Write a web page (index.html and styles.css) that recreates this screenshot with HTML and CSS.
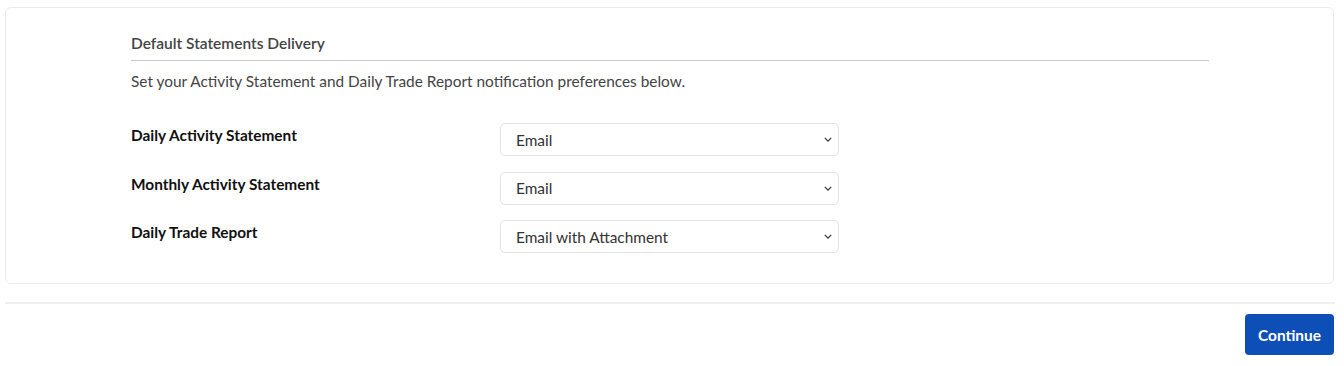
FILE: index.html
```html
<!DOCTYPE html>
<html lang="en">
<head>
  <meta charset="UTF-8">
  <meta name="viewport" content="width=device-width, initial-scale=1.0">
  <title>Default Statements Delivery</title>
  <link rel="stylesheet" href="styles.css">
</head>
<body>
  <main class="page">
    <section class="card">
      <div class="card-inner">
        <h2 class="card-title">Default Statements Delivery</h2>
        <p class="intro">Set your Activity Statement and Daily Trade Report notification preferences below.</p>
        <div class="form-row">
          <label for="das">Daily Activity Statement</label>
          <span class="select-wrap">
            <select id="das">
              <option>Email</option>
              <option>Email with Attachment</option>
            </select>
            <svg class="chevron" width="10" height="6" viewBox="0 0 10 6"><path d="M1 1l4 4 4-4" fill="none" stroke="#333" stroke-width="1.5"/></svg>
          </span>
        </div>
        <div class="form-row">
          <label for="mas">Monthly Activity Statement</label>
          <span class="select-wrap">
            <select id="mas">
              <option>Email</option>
              <option>Email with Attachment</option>
            </select>
            <svg class="chevron" width="10" height="6" viewBox="0 0 10 6"><path d="M1 1l4 4 4-4" fill="none" stroke="#333" stroke-width="1.5"/></svg>
          </span>
        </div>
        <div class="form-row">
          <label for="dtr">Daily Trade Report</label>
          <span class="select-wrap">
            <select id="dtr">
              <option>Email</option>
              <option selected>Email with Attachment</option>
            </select>
            <svg class="chevron" width="10" height="6" viewBox="0 0 10 6"><path d="M1 1l4 4 4-4" fill="none" stroke="#333" stroke-width="1.5"/></svg>
          </span>
        </div>
      </div>
    </section>
    <hr class="divider">
    <div class="actions">
      <button class="btn-primary" type="button">Continue</button>
    </div>
  </main>
</body>
</html>
```

FILE: styles.css
```css
* {
  padding: 0;
  margin: 0;
  box-sizing: border-box;
}
body {
  font-family: "Lato", "Open Sans", sans-serif;
  font-size: 15.4px;
  color: #333;
  background-color: #fff;
}
.page {
  padding: 7px 10px 0 5px;
}
.card {
  border: 1px solid #ebebeb;
  border-radius: 6px;
  height: 277px;
}
.card-inner {
  padding: 26px 124px 0 125px;
}
.card-title {
  font-size: 15.5px;
  font-weight: 600;
  color: #444;
  padding-bottom: 8px;
  border-bottom: 1px solid #c8c8c8;
}
.intro {
  color: #444;
  margin-top: 11px;
  margin-bottom: 33px;
}
.form-row {
  display: flex;
  align-items: flex-start;
  margin-bottom: 15.5px;
}
.form-row label {
  width: 369px;
  font-weight: 700;
  color: #111;
  padding-top: 3px;
}
.select-wrap {
  position: relative;
  display: block;
}
.select-wrap select {
  display: block;
  width: 339px;
  height: 33px;
  padding: 0 30px 0 15px;
  font-family: inherit;
  font-size: 15.4px;
  color: #333;
  background-color: #fff;
  border: 1px solid #e3e3e3;
  border-radius: 5px;
  appearance: none;
  -webkit-appearance: none;
}
.chevron {
  position: absolute;
  right: 7px;
  top: 14px;
  width: 8px;
  height: 5px;
  pointer-events: none;
}
.divider {
  border: 0;
  border-top: 2px solid #f0f0f0;
  margin-top: 18px;
  margin-right: -1px;
}
.actions {
  display: flex;
  justify-content: flex-end;
  padding-top: 10px;
}
.btn-primary {
  width: 89px;
  height: 41px;
  font-family: inherit;
  font-size: 15.4px;
  font-weight: 700;
  color: #fff;
  background-color: #0e4fb7;
  border: 0;
  border-radius: 4px;
}
```
